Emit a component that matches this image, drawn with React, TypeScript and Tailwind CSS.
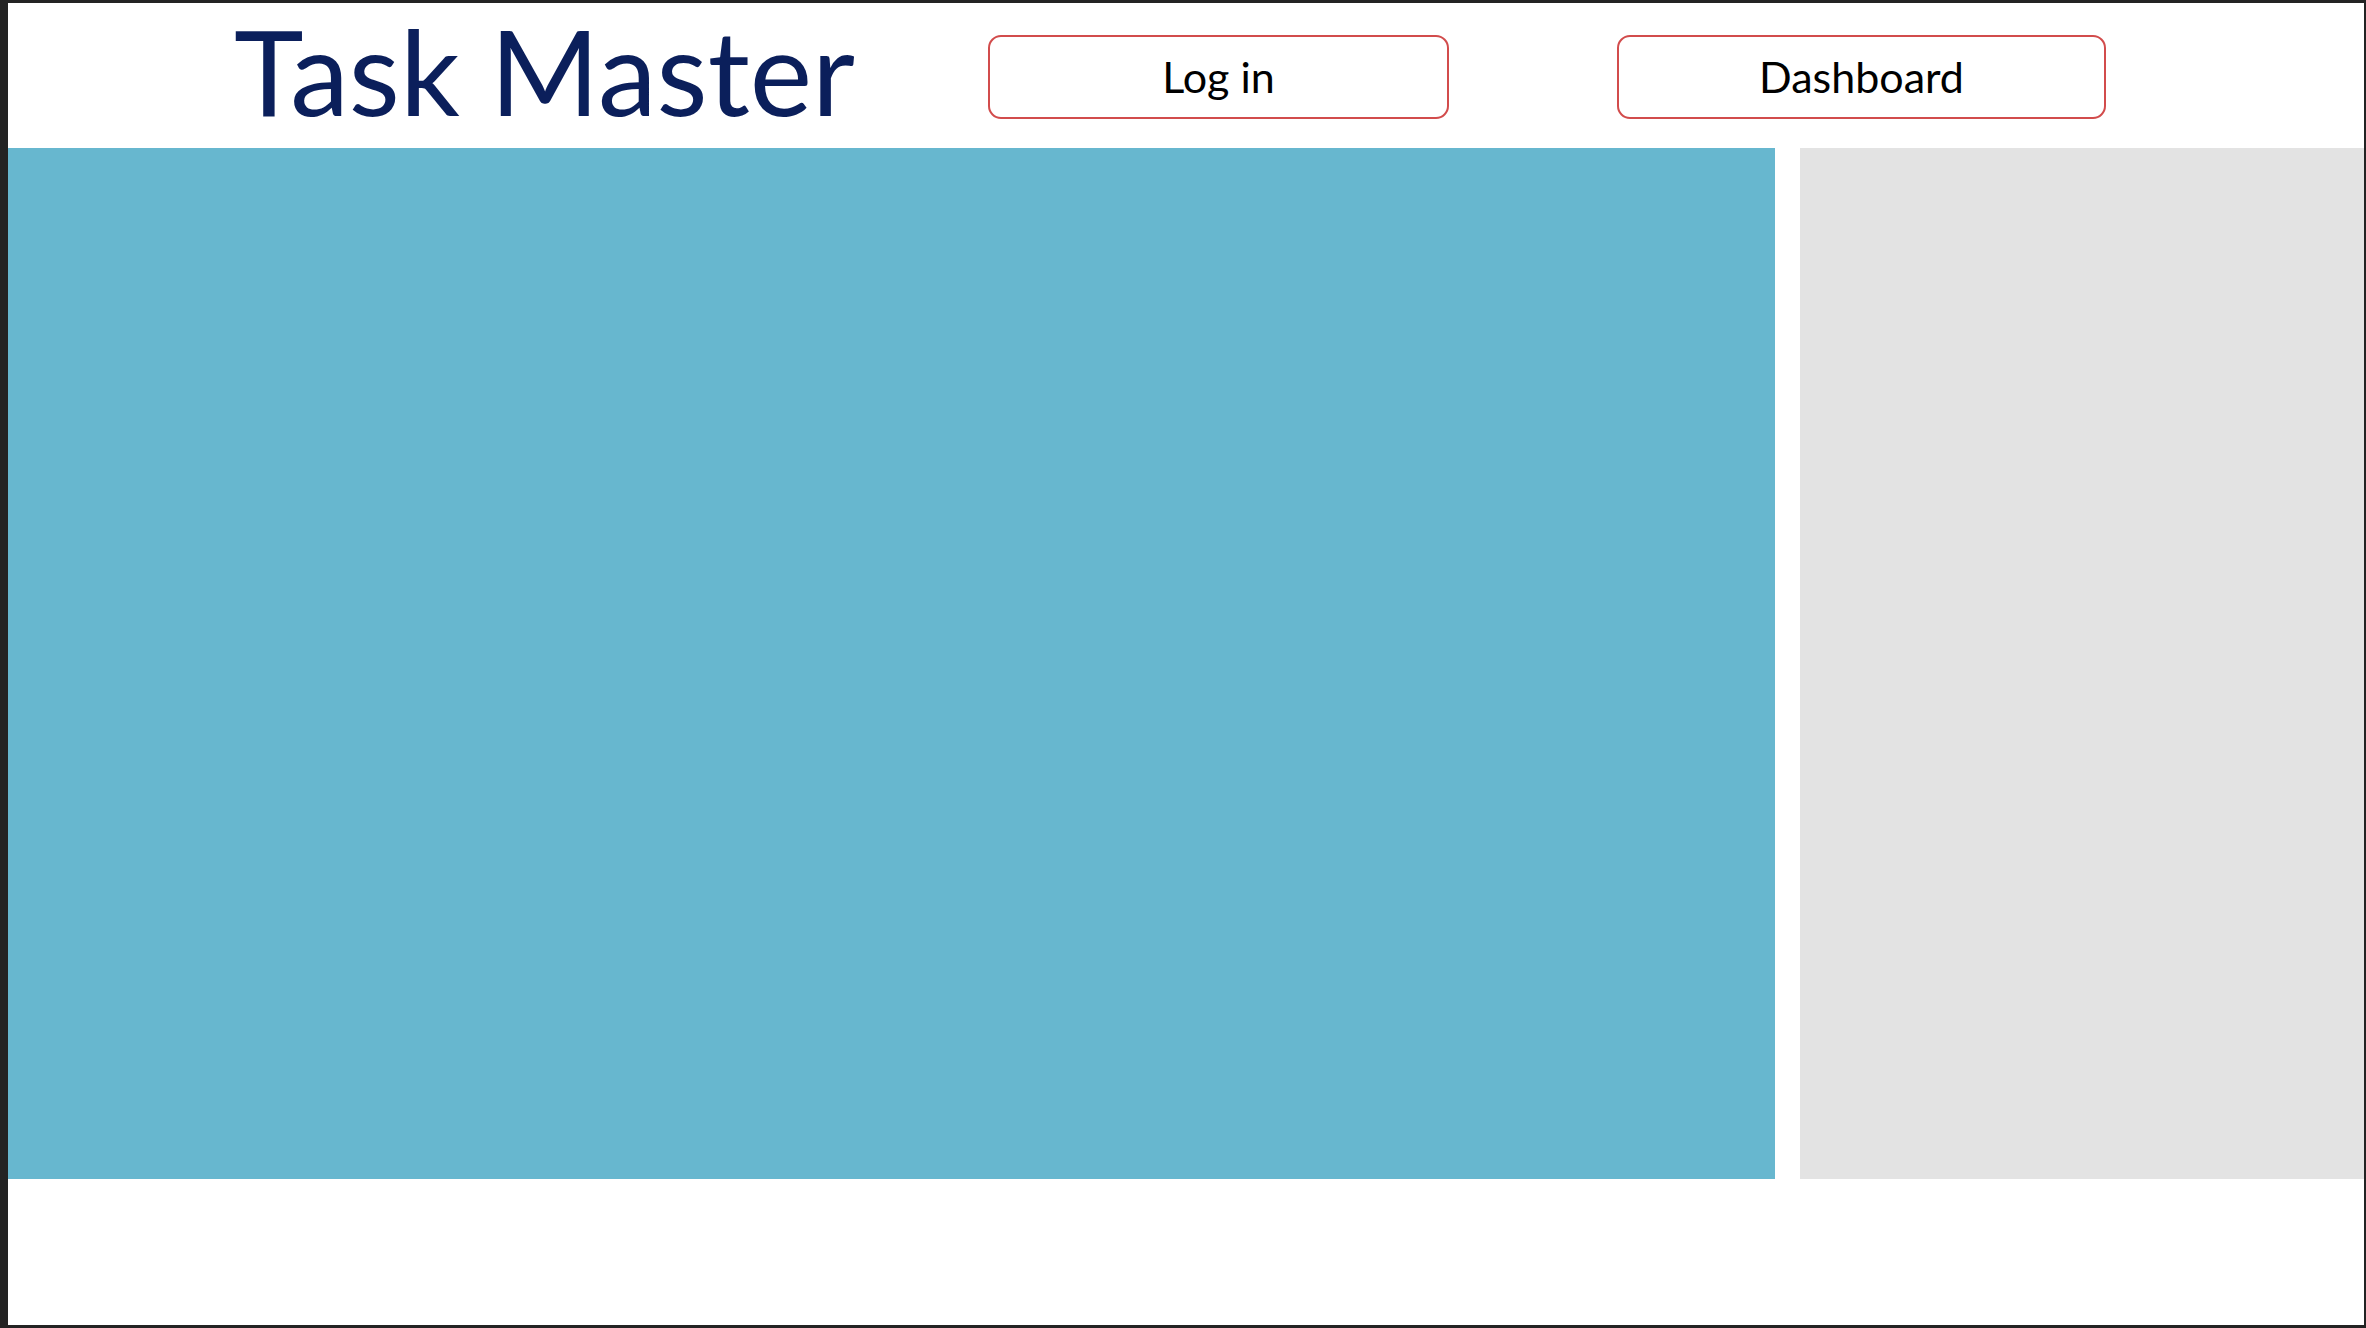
export default function App() {
  return (
    <div className="h-screen w-full bg-white border-l-[8px] border-t-[3px] border-r-2 border-b-[3px] border-[#232323] flex flex-col font-['Lato','Open_Sans',sans-serif]">
      <div className="h-[145px] flex items-start shrink-0">
        <div className="ml-[226px] w-[754px] -mt-[3px]">
          <h1 className="text-[118px] leading-[1.2] text-[#0b1f5b] whitespace-nowrap">Task Master</h1>
        </div>
        <button className="mt-[32px] w-[461px] h-[84px] rounded-[13px] border-2 border-[#d24c4c] bg-white text-black text-[43px] leading-[1.2]">
          Log in
        </button>
        <button className="ml-[168px] mt-[32px] w-[489px] h-[84px] rounded-[13px] border-2 border-[#d24c4c] bg-white text-black text-[43px] leading-[1.2]">
          Dashboard
        </button>
      </div>
      <div className="h-[1031px] flex gap-[25px] shrink-0">
        <div className="w-[1767px] bg-[#67b7cf]"></div>
        <div className="flex-1 bg-[#e3e3e3]"></div>
      </div>
      <div className="flex-1"></div>
    </div>
  );
}
